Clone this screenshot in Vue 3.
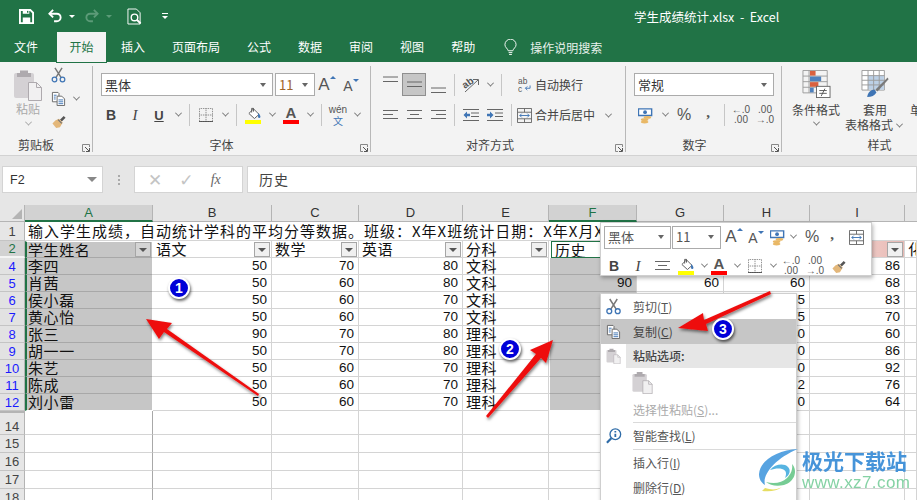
<template>
  <div class="app">
    <!-- icon sprite -->
    <svg class="sprite" aria-hidden="true">
      <symbol id="i-save" viewBox="0 0 16 16"><path d="M1 1h11l3 3v11H1z" fill="none" stroke="#fff" stroke-width="2"/><path d="M4 1h7v4H4zM4 9h8v6H4z" fill="#fff"/><path d="M8.500 2h1.500v2H8.500z" fill="#217346"/></symbol>
      <symbol id="i-undo" viewBox="0 0 16 16"><path d="M2 5h8a4 4 0 0 1 0 8H7" fill="none" stroke="currentColor" stroke-width="2"/><path d="M6 1 2 5l4 4" fill="none" stroke="currentColor" stroke-width="2"/></symbol>
      <symbol id="i-preview" viewBox="0 0 16 18"><path d="M1 1h9l4 4v12H1z" fill="none" stroke="#fff"/><circle cx="8" cy="10" r="3.500" fill="#217346" stroke="#fff" stroke-width="1.500"/><path d="m10.500 12.500 4 4" stroke="#fff" stroke-width="2"/></symbol>
      <symbol id="i-bulb" viewBox="0 0 14 18"><path d="M4.500 12.500C4 10 1 9 1 6a6 6 0 0 1 12 0c0 3-3 4-3.500 6.500z" fill="none" stroke="#fff"/><path d="M5 14.500h4M5.500 16.500h3" stroke="#fff"/></symbol>
      <symbol id="i-paste" viewBox="0 0 28 32"><rect x="0" y="4" width="20" height="25" rx="2" fill="#d4d1d4"/><path d="M6 4V1.500h8V4h3v4H3V4z" fill="#aeaaae"/><path d="M14.500 13.500h8l5 5v13h-13z" fill="#f1f0f1" stroke="#aeaaae"/><path d="M22.500 13.500v5h5" fill="none" stroke="#aeaaae"/></symbol>
      <symbol id="i-cut" viewBox="0 0 16 18"><path d="m4 1 7 11M12 1 5 12" stroke="#777" stroke-width="1.600" fill="none"/><circle cx="3.500" cy="14" r="2.600" fill="none" stroke="#3f75b5" stroke-width="1.400"/><circle cx="12.500" cy="14" r="2.600" fill="none" stroke="#3f75b5" stroke-width="1.400"/></symbol>
      <symbol id="i-copy" viewBox="0 0 16 16"><path d="M1.500 1.500h6l1 1v9h-7z" fill="#fff" stroke="#666"/><path d="M6.500 5.500h5l3 3v7h-8z" fill="#fff" stroke="#666"/><path d="M3 4.500h3M3 6.500h2M3 8.500h2M8 9.500h5M8 11.500h5M8 13.500h5" stroke="#3f75b5"/></symbol>
      <symbol id="i-brush" viewBox="0 0 16 16"><path d="m9 6 4-4 2 2-4 4z" fill="#555"/><path d="M8 5 12 9 9 14 5 15 1 10 4 7z" fill="#e3b77a"/><path d="m7 6 4 4" stroke="#777" stroke-width="1.500"/></symbol>
      <symbol id="i-border" viewBox="0 0 16 16"><path d="M.5.500h15v15H.500zM8 .500v15M.5 8h15" fill="none" stroke="#666" stroke-dasharray="1 1"/><path d="M0 15.500h16" stroke="#444"/></symbol>
      <symbol id="i-bucket" viewBox="0 0 16 13"><path d="m8 2 6 6-5 4.500L3 7z" fill="#fff" stroke="#555"/><path d="M6 6 6 1.500h2V5" fill="none" stroke="#555"/><path d="M13 6.500c2 2 2.500 3 2.500 4a1.300 1.300 0 0 1-2.600 0z" fill="#3f75b5"/></symbol>
      <symbol id="i-alignlines" viewBox="0 0 15 12"><path d="M0 1.500h15M3 5.500h9M0 9.500h15" stroke="#666"/></symbol>
      <symbol id="i-left" viewBox="0 0 15 12"><path d="M0 1.500h15M0 5.500h10M0 9.500h15" stroke="#666"/></symbol>
      <symbol id="i-right" viewBox="0 0 15 12"><path d="M0 1.500h15M5 5.500h10M0 9.500h15" stroke="#666"/></symbol>
      <symbol id="i-lines2" viewBox="0 0 15 7"><path d="M0 1h15M0 5.500h15" stroke="#666"/></symbol>
      <symbol id="i-dec" viewBox="0 0 16 12"><path d="M0 .500h16M8 4h8M8 7.500h8M0 11.500h16" stroke="#666"/><path d="M7 4.700H4V2.500L.500 6 4 9.500V7.300h3z" fill="#3f75b5"/></symbol>
      <symbol id="i-inc" viewBox="0 0 16 12"><path d="M0 .500h16M8 4h8M8 7.500h8M0 11.500h16" stroke="#666"/><path d="M0 4.700h3V2.500L6.500 6 3 9.500V7.300H0z" fill="#3f75b5"/></symbol>
      <symbol id="i-merge" viewBox="0 0 16 16"><path d="M.5.500h15v15H.500zM.5 4.500h15M.5 11.500h15M8 .500v4M8 11.500v4" fill="none" stroke="#666"/><path d="M3 8h10M5 6 3 8l2 2M11 6l2 2-2 2" fill="none" stroke="#3f75b5"/></symbol>
      <symbol id="i-money" viewBox="0 0 17 17"><path d="M.5 1.500h14v7H.500z" fill="#fff" stroke="#3f75b5" stroke-width="1.500"/><circle cx="7.500" cy="5" r="2" fill="#3f75b5"/><ellipse cx="10" cy="10.500" rx="4" ry="1.500" fill="#e9b866"/><ellipse cx="7" cy="13" rx="4" ry="1.500" fill="#e9b866"/><ellipse cx="7" cy="15.500" rx="4" ry="1.500" fill="#e9b866"/></symbol>
      <symbol id="i-cond" viewBox="0 0 30 30"><path d="M.5.500h26v24H.500zM7 .500v24M.5 6.500h26M.5 12.500h26M.5 18.500h26" fill="none" stroke="#9a9a9a"/><path d="M8 1h6v5H8z" fill="#d9613f"/><path d="M8 7h12v5H8z" fill="#4f81bd"/><path d="M8 13h9v5H8z" fill="#d9613f"/><path d="M8 19h4v5H8z" fill="#4f81bd"/><rect x="15" y="17.500" width="14.500" height="12" fill="#fff" stroke="#666"/><path d="M18 22h8M18 25h8M24 20l-4 8" stroke="#555"/></symbol>
      <symbol id="i-table" viewBox="0 0 30 30"><path d="M.5.500h24v21H.500z" fill="#fff" stroke="#9a9a9a"/><path d="M7 6h17v15H7z" fill="#bcd0e6"/><path d="M.5 6h24M.5 11h24M.5 16h24M7 .500v21M13 .500v21M19 .500v21" stroke="#9a9a9a" fill="none"/><path d="M6 29c1-5 4-8 8-8l2 3c-2 3-5 5-10 5z" fill="#3f75b5"/><path d="m15 21 13-13 1 2-12 13z" fill="#7a7a7a"/></symbol>
      <symbol id="i-search" viewBox="0 0 18 18"><circle cx="10.500" cy="7" r="6" fill="#fff" stroke="#2f6ca8" stroke-width="1.500"/><path d="m6 11.500-5 5" stroke="#2f6ca8" stroke-width="2.500"/><path d="M9.500 6.500h2V10h-2zM9.500 3.500h2v1.500h-2z" fill="#2f6ca8"/></symbol>
      <symbol id="i-launch" viewBox="0 0 8 8"><path d="M7.500 3V.500H.500v7H3" fill="none" stroke="#888"/><path d="M3 3l4 4M7.500 4v3.500H4" fill="none" stroke="#555"/></symbol>
    </svg>

    <header class="titlebar">
      <div class="qat">
        <svg class="save" width="15" height="15"><use href="#i-save" /></svg>
        <svg class="undo" width="16" height="15"><use href="#i-undo" /></svg>
        <span class="wcaret"></span>
        <svg class="redo" width="16" height="15"><use href="#i-undo" /></svg>
        <span class="wcaret dim"></span>
        <svg class="prev" width="15" height="17"><use href="#i-preview" /></svg>
        <span class="custom"></span>
      </div>
      <div class="doc">学生成绩统计.xlsx&nbsp; - &nbsp;Excel</div>
    </header>
    <nav class="tabs">
      <span v-for="t in tabs" :key="t" class="tab" :class="{ active: t === '开始', first: t === '文件' }">{{ t }}</span>
      <svg class="bulb" width="13" height="17"><use href="#i-bulb" /></svg>
      <span class="tell">操作说明搜索</span>
    </nav>

    <section class="ribbon">
      <div class="group g-clip">
        <div class="body clip">
          <div class="pastebig">
            <svg width="28" height="32"><use href="#i-paste" /></svg>
            <span>粘贴</span>
            <i class="caret light"></i>
          </div>
          <div class="clipcol">
            <svg width="15" height="16"><use href="#i-cut" /></svg>
            <div class="row"><svg width="15" height="15"><use href="#i-copy" /></svg><i class="caret gap"></i></div>
            <svg width="16" height="15"><use href="#i-brush" /></svg>
          </div>
        </div>
        <div class="label pad18"><span></span><b>剪贴板</b><svg width="8" height="8"><use href="#i-launch" /></svg></div>
      </div>

      <div class="group g-font">
        <div class="body">
          <div class="row r1">
            <div class="select fontname">黑体<i class="tri"></i></div>
            <div class="select fontsize"><em>11</em><i class="tri"></i></div>
            <span class="grow">A<i class="up"></i></span>
            <span class="grow small">A<i class="down"></i></span>
          </div>
          <div class="row r2">
            <span class="tb bold">B</span>
            <span class="tb ital">I</span>
            <span class="tb under">U</span>
            <i class="caret w14"></i>
            <span class="sep"></span>
            <span class="tb"><svg width="14" height="14"><use href="#i-border" /></svg></span>
            <i class="caret w14"></i>
            <span class="sep"></span>
            <span class="tb colored"><svg width="15" height="12"><use href="#i-bucket" /></svg><u class="yellow"></u></span>
            <i class="caret w14"></i>
            <span class="tb colored"><span class="fa">A</span><u class="red"></u></span>
            <i class="caret w14"></i>
            <span class="sep"></span>
            <span class="tb wen"><small>wén</small><b>文</b></span>
            <i class="caret w14"></i>
          </div>
        </div>
        <div class="label pad18"><span></span><b>字体</b><svg width="8" height="8"><use href="#i-launch" /></svg></div>
      </div>

      <div class="group g-align">
        <div class="body">
          <div class="row r1">
            <span class="ab"><svg class="atop" width="15" height="7"><use href="#i-lines2" /></svg></span>
            <span class="ab on"><svg width="15" height="7"><use href="#i-lines2" /></svg></span>
            <span class="ab"><svg class="abot" width="15" height="7"><use href="#i-lines2" /></svg></span>
            <span class="sep"></span>
            <span class="tb">
              <svg width="18" height="16" viewBox="0 0 18 16"><text x="1" y="10" font-size="10" font-weight="700" fill="#555" font-family="Liberation Sans" transform="rotate(-35 5 8)">ab</text><path d="M3 15 16 3M11 2.500h5.500V8" fill="none" stroke="#666"/></svg>
            </span>
            <i class="caret w14"></i>
            <span class="sep sep-wide"></span>
            <span class="tb nar">
              <svg width="13" height="16" viewBox="0 0 14 17"><text x="0" y="7" font-size="9" fill="#555" font-family="Liberation Sans">ab</text><text x="0" y="16" font-size="9" fill="#555" font-family="Liberation Sans">c</text><path d="M13 9v3H8M10 10l-2 2 2 2" fill="none" stroke="#3f75b5"/></svg>
            </span>
            <span class="cmd">自动换行</span>
          </div>
          <div class="row r2">
            <span class="ab"><svg width="15" height="12"><use href="#i-left" /></svg></span>
            <span class="ab"><svg width="15" height="12"><use href="#i-alignlines" /></svg></span>
            <span class="ab"><svg width="15" height="12"><use href="#i-right" /></svg></span>
            <span class="sep"></span>
            <span class="tb"><svg width="16" height="12"><use href="#i-dec" /></svg></span>
            <span class="tb"><svg width="16" height="12"><use href="#i-inc" /></svg></span>
            <span class="sep"></span>
            <span class="tb nar"><svg width="15" height="15"><use href="#i-merge" /></svg></span>
            <span class="cmd">合并后居中</span>
            <i class="caret gap8"></i>
          </div>
        </div>
        <div class="label pad14"><span></span><b>对齐方式</b><svg width="8" height="8"><use href="#i-launch" /></svg></div>
      </div>

      <div class="group g-num">
        <div class="body">
          <div class="row r1"><div class="select numfmt">常规<i class="tri"></i></div></div>
          <div class="row r2">
            <span class="tb"><svg width="16" height="17"><use href="#i-money" /></svg></span>
            <i class="caret w14"></i>
            <span class="tb pct">%</span>
            <span class="tb comma">,</span>
            <span class="sep"></span>
            <span class="tb dec"><span>←.0</span><span>.00</span></span>
            <span class="tb dec"><span>.00</span><span>→.0</span></span>
          </div>
        </div>
        <div class="label pad16"><span></span><b>数字</b><svg width="8" height="8"><use href="#i-launch" /></svg></div>
      </div>

      <div class="group g-style">
        <div class="body styles">
          <div class="big cf">
            <svg width="29" height="28"><use href="#i-cond" /></svg>
            <span>条件格式</span>
            <i class="caret"></i>
          </div>
          <div class="big tf">
            <svg width="29" height="28"><use href="#i-table" /></svg>
            <span>套用</span>
            <span class="tail">表格格式<i class="caret"></i></span>
          </div>
          <div class="big more"><span>单</span></div>
        </div>
        <div class="label stylelabel"><b>样式</b></div>
      </div>
    </section>

    <section class="formula">
      <div class="namebox">F2<i class="tri big3"></i></div>
      <div class="dots"></div>
      <div class="fxbox">
        <span class="fx">✕</span>
        <span class="fx">✓</span>
        <span class="fx fxs">fx</span>
      </div>
      <div class="input">历史</div>
    </section>

    <main class="sheet">
      <div class="corner"><i></i></div>
      <div v-for="(c, i) in cols" :key="c" class="colhead" :class="{ sel: i === 0 || i === 5 }">{{ c }}</div>
      <div class="colhead rest"></div>

      <div class="rowhead plain">1</div>
      <div class="cell title"><span class="titletext">输入学生成绩，自动统计学科的平均分等数据。班级：X年X班统计日期：X年X月X</span></div>

      <div class="rowhead cur">2</div>
      <div v-for="(h, i) in heads" :key="'h' + i" class="cell head" :class="h.cls">
        <span>{{ h.t }}</span><i v-if="h.f" class="filter"></i>
      </div>

      <template v-for="(r, ri) in rows" :key="r.n">
        <div class="rowhead blue">{{ r.n }}</div>
        <div class="cell a" :class="{ last: ri === rows.length - 1 }">{{ r.name }}</div>
        <div class="cell num">{{ r.b }}</div>
        <div class="cell num">{{ r.c }}</div>
        <div class="cell num">{{ r.d }}</div>
        <div class="cell txt">{{ r.e }}</div>
        <div class="cell num f" :class="{ last: ri === rows.length - 1 }">{{ r.f }}</div>
        <div class="cell num">{{ r.g }}</div>
        <div class="cell num">{{ r.h }}</div>
        <div class="cell num">{{ r.i }}</div>
        <div class="cell"></div>
      </template>

      <template v-for="n in [14, 15, 16, 17, 18]" :key="n">
        <div class="rowhead plain" :class="{ after: n === 14 }">{{ n }}</div>
        <div v-for="k in 10" :key="k" class="cell" :class="{ dark: k === 1 }"></div>
      </template>
    </main>

    <!-- floating mini toolbar -->
    <div class="mini">
      <div class="row">
        <div class="select mname">黑体<i class="tri"></i></div>
        <div class="select msize">11<i class="tri"></i></div>
        <span class="grow m1">A<i class="up"></i></span>
        <span class="grow small m2">A<i class="down"></i></span>
        <svg class="m3" width="16" height="17"><use href="#i-money" /></svg>
        <i class="caret w14"></i>
        <span class="tb pct m4">%</span>
        <span class="tb comma m5">,</span>
        <svg class="m6" width="15" height="15"><use href="#i-merge" /></svg>
      </div>
      <div class="row low">
        <span class="tb bold">B</span>
        <span class="tb ital">I</span>
        <span class="tb"><svg width="15" height="12"><use href="#i-alignlines" /></svg></span>
        <span class="tb colored"><svg width="15" height="12"><use href="#i-bucket" /></svg><u class="yellow"></u></span>
        <i class="caret w12 tuck"></i>
        <span class="tb colored"><span class="fa">A</span><u class="red"></u></span>
        <i class="caret w12"></i>
        <span class="tb"><svg width="14" height="14"><use href="#i-border" /></svg></span>
        <i class="caret w12"></i>
        <span class="tb dec"><span>←.0</span><span>.00</span></span>
        <span class="tb dec"><span>.00</span><span>→.0</span></span>
        <span class="tb"><svg width="16" height="15"><use href="#i-brush" /></svg></span>
      </div>
    </div>

    <!-- context menu -->
    <div class="menu">
      <div class="item"><span class="mi"><svg width="15" height="17"><use href="#i-cut" /></svg></span>剪切(<u>T</u>)</div>
      <div class="item hot"><span class="mi"><svg width="15" height="15"><use href="#i-copy" /></svg></span>复制(<u>C</u>)</div>
      <div class="item pastehead"><span class="mi"><svg width="15" height="16"><use href="#i-paste" /></svg></span><b>粘贴选项:</b></div>
      <div class="pasterow"><svg width="21" height="23"><use href="#i-paste" /></svg></div>
      <div class="item off">选择性粘贴(<u>S</u>)...</div>
      <div class="line"></div>
      <div class="item wide"><span class="mi"><svg width="16" height="16"><use href="#i-search" /></svg></span>智能查找(<u>L</u>)</div>
      <div class="line"></div>
      <div class="item">插入行(<u>I</u>)</div>
      <div class="item">删除行(<u>D</u>)</div>
    </div>

    <!-- annotations -->
    <svg class="arrows" width="917" height="500">
      <defs>
        <filter id="sh" x="-20%" y="-20%" width="140%" height="140%"><feDropShadow dx="1" dy="2" stdDeviation="1.500" flood-color="#000" flood-opacity=".5" /></filter>
      </defs>
      <g fill="#ee1111" filter="url(#sh)">
        <polygon points="146,319 172,323 167,329 259,394 258,396 164,332 159,339" />
        <polygon points="553,340 546,363 541,358 488,418 486,416 536,354 530,350" />
        <polygon points="678,328 703,313 704,320 770,291 771,294 706,324 708,331" />
      </g>
    </svg>
    <span v-for="n in 3" :key="n" class="badge" :class="'badge-' + n">{{ n }}</span>

    <!-- watermark -->
    <div class="mark">
      <svg width="42" height="44" viewBox="0 0 42 44">
        <path d="M40 1C20 2 2 12 1 26c0 6 3 9 6 11C4 26 18 10 40 1z" fill="#4f9fe0" />
        <path d="M12 22c5-6 14-7 18-3 3 3 2 8-3 11 2-5 1-8-3-9-4-1-8 0-12 1z" fill="#4fb0e0" />
        <path d="M34 16c6 6 3 18-8 21-8 2-14 0-18-3 8 2 16 1 21-4 4-4 6-9 5-14z" fill="#6fca8f" />
        <path d="M7 40c6 2 12 2 17-1-5 4-12 5-20 4z" fill="#e5dc5a" />
      </svg>
      <div class="marktext">
        <span class="cn">极光下载站</span>
        <span class="en">www.xz7.com</span>
      </div>
    </div>
  </div>
</template>

<script setup>
const tabs = ["文件", "开始", "插入", "页面布局", "公式", "数据", "审阅", "视图", "帮助"];
const cols = ["A", "B", "C", "D", "E", "F", "G", "H", "I"];

const heads = [
  { t: "学生姓名", f: true, cls: "a headsel" },
  { t: "语文", f: true },
  { t: "数学", f: true },
  { t: "英语", f: true },
  { t: "分科", f: true },
  { t: "历史", cls: "active" },
  { t: "" },
  { t: "" },
  { t: "", f: true, cls: "pink" },
  { t: "化" },
];

const rows = [
  { n: 4, name: "李四", b: 50, c: 70, d: 80, e: "文科", i: 86 },
  { n: 5, name: "肖茜", b: 50, c: 60, d: 80, e: "文科", f: 90, g: 60, h: 60, i: 68 },
  { n: 6, name: "侯小磊", b: 50, c: 60, d: 70, e: "文科", h: 65, i: 83 },
  { n: 7, name: "黄心怡", b: 50, c: 60, d: 70, e: "文科", h: 75, i: 70 },
  { n: 8, name: "张三", b: 90, c: 70, d: 80, e: "理科", h: 80, i: 60 },
  { n: 9, name: "胡一一", b: 50, c: 70, d: 80, e: "理科", h: 80, i: 86 },
  { n: 10, name: "朱艺", b: 50, c: 60, d: 70, e: "理科", h: 80, i: 92 },
  { n: 11, name: "陈成", b: 50, c: 60, d: 70, e: "理科", h: 62, i: 76 },
  { n: 12, name: "刘小雷", b: 50, c: 60, d: 70, e: "理科", h: 70, i: 64 },
];
</script>

<style>
html, body { margin: 0; background: #fff; overflow: hidden; }
</style>

<style scoped>
.app {
  position: relative;
  width: 917px;
  height: 500px;
  overflow: hidden;
  background: #e6e6e6;
  font-family: "Noto Sans CJK SC", "Liberation Sans", sans-serif;
  font-size: 12px;
  color: #444;
}
.sprite { position: absolute; width: 0; height: 0; }
svg { display: block; flex: none; }
i, em { font-style: normal; }

/* title + tabs */
.titlebar {
  height: 32px;
  background: #217346;
  display: flex;
  align-items: center;
  color: #fff;
}
.qat { width: 634px; display: flex; align-items: center; padding-left: 19px; box-sizing: border-box; }
.undo { margin-left: 13px; color: #fff; }
.redo { margin-left: 9px; color: #5c9b78; transform: scaleX(-1); }
.wcaret { width: 0; height: 0; margin-left: 6px; border: 3px solid transparent; border-top: 3px solid #fff; border-bottom: 0; }
.wcaret.dim { border-top-color: #5c9b78; }
.prev { margin-left: 15px; }
.custom { width: 6px; height: 6px; margin-left: 20px; border-top: 1px solid #fff; position: relative; }
.custom::after { content: ""; position: absolute; top: 2px; left: 0; border: 3px solid transparent; border-top: 3px solid #fff; border-bottom: 0; }
.doc { font-size: 12.500px; white-space: nowrap; }
.tabs {
  height: 30px;
  background: #217346;
  display: flex;
  align-items: center;
  color: #fff;
  gap: 1px;
}
.tab { height: 30px; line-height: 30px; padding: 0 13px; }
.tab.first { padding: 0 15px 0 14px; }
.tab.active { background: #f3f3f3; color: #217346; padding: 0 12.500px; }
.bulb { margin-left: 15px; }
.tell { margin-left: 12px; color: #e8f1ec; }

/* ribbon */
.ribbon {
  height: 94px;
  box-sizing: border-box;
  background: #f3f3f3;
  border-bottom: 1px solid #d2d2d2;
  display: flex;
  align-items: flex-start;
}
.group {
  margin-top: 4px;
  height: 86px;
  border-right: 1px solid #b8b8b8;
  box-sizing: border-box;
  display: flex;
  flex-direction: column;
  flex: none;
}
.g-clip { width: 93px; }
.g-font { width: 278px; }
.g-align { width: 255px; }
.g-num { width: 156px; }
.g-style { width: 135px; border: 0; }
.body { height: 71px; }
.row { display: flex; align-items: center; }
.r1 { height: 23px; margin-top: 7px; }
.r2 { height: 24px; margin-top: 7px; }
.label {
  display: grid;
  grid-template-columns: 1fr auto 1fr;
  align-items: center;
  height: 15px;
  line-height: 15px;
  padding: 0 2px 0 0;
  color: #444;
}
.label b { font-weight: 400; }
.label svg { justify-self: end; align-self: end; }
.pad18 b { position: relative; left: -9px; }
.pad14 b { position: relative; left: -7px; }
.pad16 b { position: relative; left: -8px; }
.stylelabel { display: flex; justify-content: center; padding-left: 62px; }

.caret { display: inline-block; width: 5px; height: 5px; box-sizing: border-box; flex: none; position: relative; }
.caret::before {
  content: ""; position: absolute; left: 0; top: 0;
  width: 4px; height: 4px; border: solid #777; border-width: 0 1px 1px 0;
  transform: rotate(45deg) translate(-1px, -1px);
}
.caret.light::before { border-color: #aaa; }
.w14 { width: 14px; height: 6px; }
.w14::before { left: 5px; }
.w12 { width: 12px; height: 6px; }
.w12::before { left: 4px; }
.tuck { margin-right: -3px; }
.gap { margin-left: 8px; }
.gap8 { margin-left: 11px; }

.tri { width: 0; height: 0; border: 3.500px solid transparent; border-top: 4px solid #666; border-bottom: 0; margin-left: auto; flex: none; }
.tri.big3 { border-width: 5px 5px 0; border-top-color: #888; }
.select {
  display: flex; align-items: center; height: 23px; box-sizing: border-box;
  background: #fff; border: 1px solid #ababab; padding: 0 6px 0 3px; color: #333; font-size: 13px; line-height: 18px; flex: none;
}
.tb { width: 24px; height: 24px; display: flex; align-items: center; justify-content: center; flex: none; }
.tb.nar { width: 16px; }
.sep { width: 1px; height: 22px; background: #c6c6c6; margin: 0 4px; flex: none; }
.sep-wide { margin: 0 14px 0 4px; }
.bold { font: 700 14px "Liberation Sans", sans-serif; color: #444; }
.ital { font: italic 400 15px "Liberation Serif", serif; color: #444; }
.under { font: 700 13px "Liberation Sans", sans-serif; color: #444; text-decoration: underline; }
.colored { flex-direction: column; gap: 1px; }
.colored u { display: block; width: 16px; height: 4px; flex: none; }
.yellow { background: #ffff00; }
.red { background: #ff0000; }
.fa { font: 700 15px/13px "Liberation Sans", sans-serif; color: #555; }
.wen { flex-direction: column; }
.wen small { font: 10px/10px "Liberation Sans", sans-serif; color: #555; }
.wen b { font-weight: 400; font-size: 10px; line-height: 11px; color: #3f75b5; }
.pct { font: 16px "Liberation Sans", sans-serif; color: #555; }
.comma { font: 700 15px "Liberation Serif", serif; color: #555; padding-bottom: 5px; box-sizing: border-box; }
.dec { flex-direction: column; align-items: center; font: 10px/10px "Liberation Sans", sans-serif; color: #555; }

.grow {
  width: 24px; display: flex; justify-content: center; position: relative;
  font: 17px "Liberation Sans", sans-serif; color: #555; flex: none;
}
.grow.small { font-size: 14px; padding-top: 2px; box-sizing: border-box; }
.up, .down { width: 0; height: 0; border: 3px solid transparent; margin-top: 1px; }
.up { border-bottom: 3px solid #3f75b5; border-top: 0; }
.down { border-top: 3px solid #3f75b5; border-bottom: 0; }

.clip { display: flex; padding-left: 14px; }
.pastebig { width: 28px; display: flex; flex-direction: column; align-items: center; padding-top: 3px; color: #a9a9a9; }
.pastebig span { font-size: 12px; line-height: 14px; margin-top: 1px; }
.pastebig .caret { margin-top: 5px; }
.clipcol { margin-left: 9px; display: flex; flex-direction: column; gap: 8px; padding-top: 1px; }

.g-font .body { padding-left: 8px; }
.fontname { width: 172px; }
.fontsize { width: 40px; margin-left: 2px; }
.fontsize em { color: #a0662a; }
.r2 .bold { margin-left: -2px; }

.g-align .body { padding-left: 7px; }
.ab { width: 24px; height: 24px; display: flex; align-items: center; justify-content: center; box-sizing: border-box; flex: none; }
.r1 .ab { height: 23px; }
.ab.on { background: #c6c6c6; border: 1px solid #8f8f8f; }
.atop { margin-bottom: 11px; }
.abot { margin-top: 11px; }
.cmd { color: #444; margin-left: 3px; white-space: nowrap; line-height: 18px; }

.g-num .body { padding-left: 8px; }
.numfmt { width: 140px; }

.styles { display: flex; }
.big { display: flex; flex-direction: column; align-items: center; padding-top: 4px; flex: none; }
.big span { line-height: 15px; }
.big svg { margin-bottom: 4px; }
.big .caret { margin-top: 4px; }
.cf { width: 48px; margin-left: 10px; }
.tf { width: 60px; margin-left: 5px; }
.tf .tail { white-space: nowrap; align-self: flex-start; }
.tf .tail .caret { margin: 0 0 2px 4px; }
.more { width: 12px; margin-left: 5px; padding-top: 36px; }

/* formula bar */
.formula {
  height: 49px;
  background: #e6e6e6;
  display: flex;
  align-items: flex-start;
  padding: 10px 0 0 2px;
  box-sizing: border-box;
}
.namebox {
  width: 101px; height: 27px; box-sizing: border-box; background: #fff; border: 1px solid #d4d4d4;
  display: flex; align-items: center; padding: 0 5px 0 7px;
  font: 12.500px "Liberation Sans", sans-serif; color: #333;
}
.dots { width: 2px; height: 10px; margin: 9px 14px 0 15px; border-left: 2px dotted #aaa; box-sizing: border-box; }
.fxbox {
  width: 109px; height: 27px; box-sizing: border-box; background: #fff; border: 1px solid #d4d4d4;
  display: flex; align-items: center; padding-left: 13px;
}
.fx { width: 36px; font: 17px "DejaVu Sans", sans-serif; color: #c4c4c4; }
.fx.fxs { font: italic 14px "Liberation Serif", serif; color: #666; }
.input {
  width: 670px; height: 27px; margin-left: 4px; box-sizing: border-box; background: #fff; border: 1px solid #d4d4d4;
  padding-left: 11px; line-height: 24px; font-size: 14px; letter-spacing: 1px; color: #444;
}

/* sheet */
.sheet {
  height: 295px;
  overflow: hidden;
  background: #fff;
  display: grid;
  grid-template-columns: 25px 128px 119px 87px 104px 86px 88px 87px 86px 95px 12px;
  grid-template-rows: 17px 19px 17px repeat(9, 17px) 24px 18px 18px 18px 18px;
  font-size: 15px;
  line-height: 16px;
  color: #111;
}
.corner { background: #e6e6e6; border-right: 1px solid #b4b4b4; border-bottom: 1px solid #b4b4b4; box-sizing: border-box; position: relative; }
.corner i { position: absolute; right: 2px; bottom: 2px; border-style: solid; border-width: 0 0 10px 10px; border-color: transparent transparent #b4b4b4 transparent; }
.colhead {
  background: #e6e6e6; border-right: 1px solid #b4b4b4; border-bottom: 1px solid #b4b4b4; box-sizing: border-box;
  text-align: center; font: 13px/16px "Liberation Sans", sans-serif; color: #333;
}
.colhead.sel { background: #d2d2d2; color: #217346; border-bottom: 2px solid #217346; }
.colhead.rest { border-right: 0; }
.rowhead {
  background: #e6e6e6; border-right: 1px solid #b4b4b4; border-bottom: 1px solid #c4c4c4; box-sizing: border-box;
  display: flex; align-items: center; justify-content: center;
  font: 13px/15px "Liberation Sans", sans-serif; color: #444;
}
.rowhead.cur { background: #d2d2d2; color: #217346; border-bottom: 2px solid #f4f4f4; }
.rowhead.blue { background: #e2e2e2; color: #1a1aff; }
.rowhead.after { border-top: 2px solid #b4b4b4; padding-top: 5px; }
.cell {
  border-right: 1px solid #d4d4d4; border-bottom: 1px solid #d4d4d4; box-sizing: border-box;
  display: flex; align-items: center; padding: 0 3px; white-space: nowrap; overflow: hidden; min-width: 0;
  letter-spacing: .6px;
}
.cell.title { grid-column: 2 / -1; border: 0; border-bottom: 1px solid #d4d4d4; overflow: visible; letter-spacing: 1px; }
.cell.dark { border-right-color: #a8a8a8; }
.titletext { letter-spacing: 1px; }
.num { justify-content: flex-end; font: 13.500px/16px "Liberation Sans", sans-serif; padding: 0 4px; letter-spacing: 0; }
.a { background: #c6c6c6; border-left: 2px solid #217346; border-right: 1px solid #fff; border-bottom: 1px solid #a8a8a8; padding-left: 1px; }
.a.last { border-bottom: 1px solid #fff; }
.f { background: #c6c6c6; border-left: 1px solid #fff; border-bottom: 1px solid #a8a8a8; }
.f.last { border-bottom: 1px solid #fff; }
.head { justify-content: space-between; padding-right: 1px; }
.headsel { border-top: 1px solid #fff; }
.filter {
  width: 16px; height: 15px; box-sizing: border-box; background: #f0f0f0; border: 1px solid #a6a6a6; flex: none; position: relative;
}
.filter::after { content: ""; position: absolute; left: 3px; top: 5px; border: 4px solid transparent; border-top: 4px solid #555; border-bottom: 0; }
.headsel .filter { background: #d4d4d4; }
.active { background: #fff; border: 1px solid #217346; margin-left: 2px; }
.pink { background: linear-gradient(90deg, #fff 0%, #f1cfcb 50%, #e7b8b3 100%); justify-content: flex-end; }

/* mini toolbar */
.mini {
  position: absolute; left: 600px; top: 222px; width: 272px; height: 54px; box-sizing: border-box;
  background: #fff; border: 1px solid #cfcfcf; box-shadow: 1px 2px 4px rgba(0, 0, 0, .3);
  padding: 2px 3px 0;
}
.mname { width: 67px; }
.msize { width: 49px; margin-left: 1px; }
.mname, .msize { font-size: 13px; color: #555; }
.m1 { margin-left: 1px; }
.m2 { margin-left: -2px; }
.m3 { margin-left: 2px; }
.m4 { margin-left: 0; }
.m5 { margin-left: -4px; }
.m6 { margin-left: 5px; }
.low { margin-top: 5px; height: 24px; }
.low .bold { margin-left: -2px; }

/* context menu */
.menu {
  position: absolute; left: 600px; top: 293px; width: 197px; height: 215px; box-sizing: border-box;
  background: #fff; border: 1px solid #cfcfcf; box-shadow: 1px 2px 4px rgba(0, 0, 0, .3);
  color: #555;
}
.item { display: flex; align-items: center; height: 25px; line-height: 18px; padding-left: 32px; position: relative; white-space: pre; }
.item u { text-underline-offset: 1px; }
.mi { position: absolute; left: 0; top: 0; width: 25px; height: 100%; display: flex; align-items: center; justify-content: center; }
.hot { background: #c6c6c6; color: #444; }
.pastehead { height: 24px; background: linear-gradient(90deg, #fff 25px, #e6e6e6 25px); color: #444; }
.pastehead b { font-weight: 500; }
.pasterow { height: 30px; padding: 3px 0 0 31px; box-sizing: border-box; }
.off { color: #aaa; height: 24px; }
.line { height: 1px; background: #dadada; margin: 0 0 0 32px; }
.wide { height: 26px; }

/* annotations */
.arrows { position: absolute; left: 0; top: 0; pointer-events: none; }
.badge {
  position: absolute; width: 22px; height: 22px; box-sizing: border-box; border-radius: 50%;
  background: #0000d8; border: 2px solid #fff; box-shadow: 1px 2px 3px rgba(0, 0, 0, .6);
  color: #fff; font: 700 14px/18px "Liberation Sans", sans-serif; text-align: center;
}
.badge-1 { left: 168px; top: 277px; }
.badge-2 { left: 499px; top: 338px; }
.badge-3 { left: 712px; top: 318px; }

.mark { position: absolute; left: 758px; top: 448px; display: flex; gap: 2px; opacity: .95; }
.marktext { display: flex; flex-direction: column; }
.cn { font-size: 21px; line-height: 25px; font-weight: 700; color: #3d8fd8; white-space: nowrap; }
.en { font: 17px/20px "Liberation Sans", sans-serif; color: #7fd0a0; letter-spacing: .4px; white-space: nowrap; }
</style>
